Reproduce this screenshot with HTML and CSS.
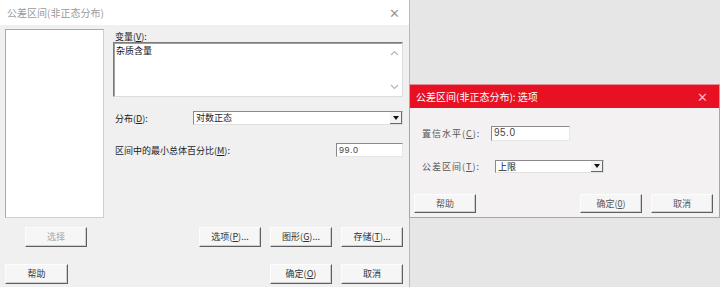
FILE: index.html
```html
<!DOCTYPE html>
<html lang="zh-CN">
<head>
    <meta charset="UTF-8">
    <title>公差区间(非正态分布)</title>
    <link rel="stylesheet" href="styles.css">
</head>
<body>
    <div class="desktop">
        <!-- main dialog -->
        <div class="window main-win">
            <div class="titlebar">
                <span class="title">公差区间(非正态分布)</span>
                <span class="close">&#x2715;</span>
            </div>
            <div class="client">
                <div class="top">
                    <div class="varlist"></div>
                    <div class="fields">
                        <div class="label">变量(<u>V</u>):</div>
                        <div class="textbox">
                            <span>杂质含量</span>
                            <div class="vscroll">
                                <svg width="9" height="6" viewBox="0 0 9 6"><path d="M1 5 L4.5 1.5 L8 5" fill="none" stroke="#b5b5b5" stroke-width="1.2"/></svg>
                                <svg width="9" height="6" viewBox="0 0 9 6"><path d="M1 1 L4.5 4.5 L8 1" fill="none" stroke="#b5b5b5" stroke-width="1.2"/></svg>
                            </div>
                        </div>
                        <div class="row dist-row">
                            <span class="label">分布(<u>D</u>):</span>
                            <div class="combo wide">
                                <span>对数正态</span>
                                <span class="drop"><i></i></span>
                            </div>
                        </div>
                        <div class="row pct-row">
                            <span class="label">区间中的最小总体百分比(<u>M</u>):</span>
                            <div class="edit pct">99.0</div>
                        </div>
                    </div>
                </div>
                <div class="btnrow first">
                    <button class="btn disabled select">选择</button>
                    <span class="spacer"></span>
                    <button class="btn">选项(<u>P</u>)...</button>
                    <button class="btn">图形(<u>G</u>)...</button>
                    <button class="btn">存储(<u>T</u>)...</button>
                </div>
                <div class="btnrow second">
                    <button class="btn help">帮助</button>
                    <span class="spacer"></span>
                    <button class="btn">确定(<u>O</u>)</button>
                    <button class="btn">取消</button>
                </div>
            </div>
        </div>

        <!-- options dialog -->
        <div class="window opt-win">
            <div class="titlebar red">
                <span class="title">公差区间(非正态分布): 选项</span>
                <span class="close">&#x2715;</span>
            </div>
            <div class="client opt-client">
                <div class="row conf-row">
                    <span class="label">置信水平(<u>C</u>):</span>
                    <div class="edit conf">95.0</div>
                </div>
                <div class="row tol-row">
                    <span class="label">公差区间(<u>T</u>):</span>
                    <div class="combo small">
                        <span>上限</span>
                        <span class="drop"><i></i></span>
                    </div>
                </div>
                <div class="btnrow opt-btns">
                    <button class="btn">帮助</button>
                    <span class="spacer"></span>
                    <button class="btn">确定(<u>0</u>)</button>
                    <button class="btn">取消</button>
                </div>
            </div>
        </div>
    </div>
</body>
</html>
```

FILE: styles.css
```css
body {
    margin: 0;
    font-family: "Noto Sans CJK SC", "Liberation Sans", sans-serif;
    font-size: 9px;
    color: #222;
    background: #e6e6e6;
}
.desktop {
    position: relative;
    width: 720px;
    height: 287px;
    overflow: hidden;
}
.window {
    position: absolute;
    background: #f0f0f0;
    box-sizing: border-box;
}
.main-win {
    left: 0;
    top: 0;
    width: 410px;
    height: 287px;
    border-right: 1px solid #b9b9b9;
}
.opt-win {
    left: 409px;
    top: 84px;
    width: 311px;
    height: 134px;
    border: 1px solid #e58a98;
    background: #f3f1f1;
}
.titlebar {
    height: 25px;
    background: #fff;
    display: flex;
    align-items: center;
    justify-content: space-between;
    padding: 0 6px 0 7px;
}
.titlebar .title {
    color: #9a9a9a;
    font-size: 10px;
}
.titlebar .close {
    color: #9a9a9a;
    font-size: 13px;
    margin-right: 3px;
}
.titlebar.red {
    height: 23px;
    background: #e81123;
    padding: 0 6px;
}
.titlebar.red .title {
    color: #fff;
}
.titlebar.red .close {
    color: #f6b9bf;
    margin-right: 5px;
}
.client {
    padding: 4px 6px 0 5px;
}
.top {
    display: flex;
    gap: 9px;
}
.varlist {
    width: 100px;
    height: 189px;
    background: #fff;
    box-sizing: border-box;
    border: 1px solid #a9a9a9;
    border-right-color: #cfcfcf;
    border-bottom-color: #cfcfcf;
}
.fields {
    flex: 1;
    display: flex;
    flex-direction: column;
}
.label {
    line-height: 13px;
}
.fields > .label {
    padding: 0 2px;
    margin-top: 1px;
    height: 12px;
}
.textbox {
    height: 55px;
    background: #fff;
    box-sizing: border-box;
    border: 1px solid #7a7a7a;
    border-right-color: #dcdcdc;
    border-bottom-color: #dcdcdc;
    box-shadow: inset 1px 1px 0 #a0a0a0;
    display: flex;
    justify-content: space-between;
    padding: 2px 0 0 2px;
    line-height: 12px;
    color: #111;
}
.vscroll {
    width: 15px;
    display: flex;
    flex-direction: column;
    justify-content: space-between;
    align-items: center;
    padding: 5px 0 6px;
}
.row {
    display: flex;
    align-items: center;
}
.dist-row {
    margin-top: 14px;
    padding-left: 2px;
}
.dist-row .label {
    width: 78px;
}
.pct-row {
    margin-top: 18px;
    padding-left: 2px;
    justify-content: space-between;
}
.combo {
    height: 14px;
    background: #fff;
    box-sizing: border-box;
    border: 1px solid #8a8a8a;
    border-right-color: #e0e0e0;
    border-bottom-color: #e0e0e0;
    display: flex;
    justify-content: space-between;
    align-items: center;
    padding-left: 2px;
    line-height: 12px;
}
.combo.wide {
    width: 210px;
}
.drop {
    width: 12px;
    height: 12px;
    box-sizing: border-box;
    background: #f3f3f3;
    border-right: 1px solid #6a6a6a;
    border-bottom: 1px solid #6a6a6a;
    display: flex;
    align-items: center;
    justify-content: center;
}
.drop i {
    width: 0;
    height: 0;
    border-left: 3px solid transparent;
    border-right: 3px solid transparent;
    border-top: 4px solid #111;
}
.edit {
    height: 14px;
    background: #fff;
    box-sizing: border-box;
    border: 1px solid #8a8a8a;
    border-right-color: #e6e6e6;
    border-bottom-color: #e6e6e6;
    padding-left: 2px;
    line-height: 12px;
    font-family: "Liberation Sans", sans-serif;
    font-size: 9px;
    letter-spacing: 0.5px;
    color: #444;
}
.edit.pct {
    width: 67px;
}
.btnrow {
    display: flex;
    gap: 9px;
}
.btnrow .spacer {
    flex: 1;
}
.btnrow.first {
    margin-top: 9px;
}
.btnrow.second {
    margin-top: 17px;
}
.btn {
    width: 62px;
    height: 20px;
    padding: 0;
    font: inherit;
    color: #333;
    background: #f6f6f6;
    border: 1px solid #fdfdfd;
    border-right-color: #5f5f5f;
    border-bottom-color: #5f5f5f;
    box-shadow: inset -1px -1px 0 #cfcfcf;
    line-height: 16px;
}
.btn.select {
    margin-left: 20px;
}
.btn.disabled {
    color: #a6a6a6;
}
.btn.help {
    width: 63px;
}
.opt-client {
    padding: 18px 6px 0 4px;
}
.conf-row .label,
.tol-row .label {
    width: 69px;
    padding-left: 8px;
    color: #555;
    letter-spacing: 1px;
}
.edit.conf {
    width: 79px;
    height: 15px;
    font-size: 10px;
}
.tol-row {
    margin-top: 19px;
}
.combo.small {
    width: 109px;
    height: 13px;
    margin-left: 4px;
}
.combo.small .drop {
    height: 11px;
}
.opt-btns {
    margin-top: 21px;
}
.opt-btns .btn {
    height: 19px;
    color: #555;
}
```
